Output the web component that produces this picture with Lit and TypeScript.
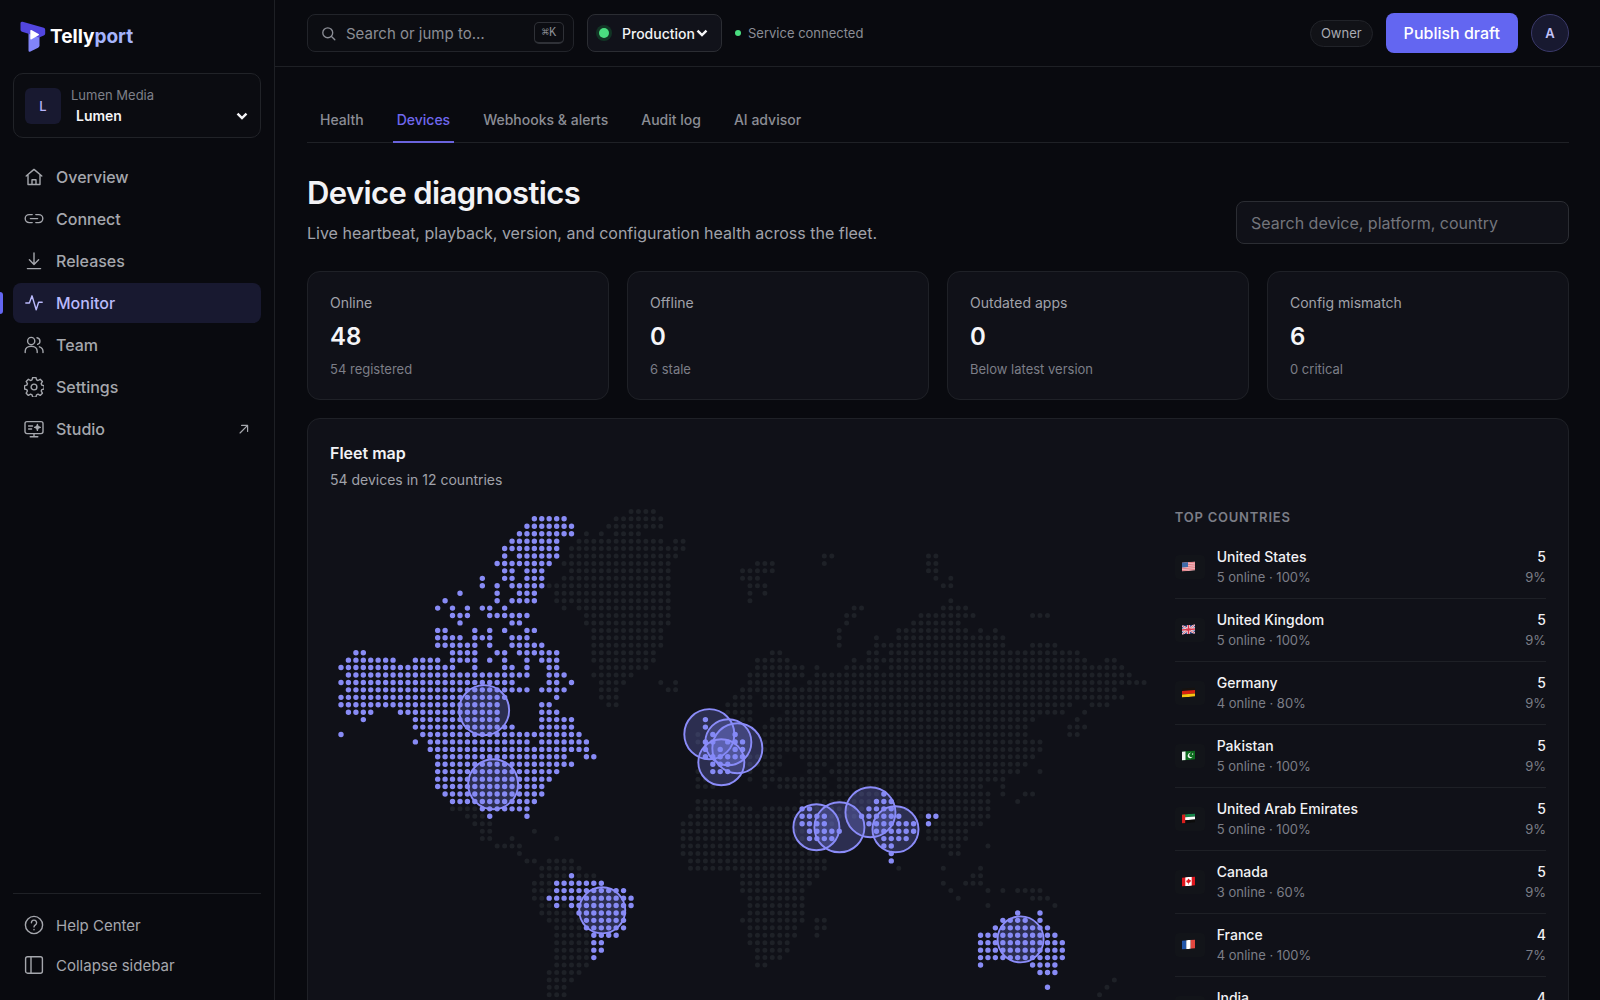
import { LitElement, html, css, svg, nothing, type TemplateResult } from "lit";
import { customElement, property } from "lit/decorators.js";
import { classMap } from "lit/directives/class-map.js";

/* ---------- data ---------- */

interface NavItem { label: string; icon: string; active?: boolean; external?: boolean }

const NAV: NavItem[] = [
  { label: "Overview", icon: "home" },
  { label: "Connect", icon: "link" },
  { label: "Releases", icon: "download" },
  { label: "Monitor", icon: "pulse", active: true },
  { label: "Team", icon: "users" },
  { label: "Settings", icon: "gear" },
  { label: "Studio", icon: "studio", external: true },
];

const TABS = ["Health", "Devices", "Webhooks & alerts", "Audit log", "AI advisor"];

const STATS = [
  { label: "Online", value: 48, note: "54 registered" },
  { label: "Offline", value: 0, note: "6 stale" },
  { label: "Outdated apps", value: 0, note: "Below latest version" },
  { label: "Config mismatch", value: 6, note: "0 critical" },
];

const COUNTRIES = [
  { code: "us", name: "United States", total: 5, online: 5, share: 9 },
  { code: "gb", name: "United Kingdom", total: 5, online: 5, share: 9 },
  { code: "de", name: "Germany", total: 5, online: 4, share: 9 },
  { code: "pk", name: "Pakistan", total: 5, online: 5, share: 9 },
  { code: "ae", name: "United Arab Emirates", total: 5, online: 5, share: 9 },
  { code: "ca", name: "Canada", total: 5, online: 3, share: 9 },
  { code: "fr", name: "France", total: 4, online: 4, share: 7 },
  { code: "in", name: "India", total: 4, online: 4, share: 7 },
];

/* Land dots, one entry per grid row: column runs such as "3,10-21". */
const LAND: Record<number, string> = {
  0: "39-42", 1: "37-43", 2: "36-43", 3: "33,35,37-40", 4: "32-43,45-46", 5: "31-46",
  6: "31-45,65-66,79-80", 7: "30-44,56-58,65,79-80", 8: "31-44,54-58,79-80", 9: "30-44,54-56,80,82",
  10: "28-44,55-57,81-82", 11: "29-44,55,57", 12: "29-44,55,82", 13: "30,32-44,69-70,81-84",
  14: "33-44,68-69,78-85,93-95", 15: "33-44,68,77-83", 16: "34-43,67,75-84,86,88",
  17: "34-43,67,72,75-89", 18: "34-43,67,72-89,93-96", 19: "34-42,58-59,71-72,74-99",
  20: "34-42,56-60,69,71-100,103-104", 21: "35-41,56-62,64,68-72,74-105",
  22: "34-39,55-62,64-106", 23: "35-38,43,45,55-60,63-108", 24: "35-37,44-45,54-104",
  25: "35-37,53-55,57-105", 26: "36-37,52-55,57-98,101-103", 27: "52-55,60-97,100",
  28: "54-55,58-93,99", 29: "57-92,98-100", 30: "48,57-92,98-99", 31: "48,57-94", 32: "57-94",
  33: "55-59,62-93", 34: "55-59,63-65,67-92", 35: "48,55,57-58,63-64,66-91,94",
  36: "48-49,55,57-65,67-89", 37: "48-50,57,59-65,67-86,89", 38: "62-72,74-87,89,92-93",
  39: "48-53,62-71,75-87,91", 40: "15-18,48-55,57-61,64-70,75-87", 41: "17-19,47-61,66-69,78,81-87",
  42: "18-20,46-61,66,80-86", 43: "19-20,26,46-62,79-84", 44: "19-20,23,29,46-62,79-84",
  45: "21-24,46-62,81-83,87", 46: "24,46-64,82-83", 47: "25-26,28-31,47-65",
  48: "27-32,47-65,75,81,86", 49: "27-30,32-34,54-64,85-86", 50: "26-28,54-63,81,84-86",
  51: "26-28,54-62,82,87,89,91-94", 52: "26-27,55-62,83,93-95", 53: "27-28,30,55-62,87,96",
  54: "27-31,55-62", 55: "28-32,54-62,64-65", 56: "29-32,55-61,64-65", 57: "29-33,55-61,64",
  58: "29-33,55-60", 59: "29-33,56-60", 60: "29-33,56-59", 61: "29-33,56-57", 62: "28-32",
  63: "28-31,104", 64: "28-30,103", 65: "28-30,102", 66: "28-29",
};

/* Dots of countries that have registered devices. */
const ACTIVE: Record<number, string> = {
  1: "26-30", 2: "25-31", 3: "24-31", 4: "23-29", 5: "22-29", 6: "22,24-29", 7: "21-28",
  8: "22-23,25-27", 9: "19,22-23,25-27", 10: "19,21,23-27", 11: "16,21,24-26", 12: "14,21,23-26",
  13: "13,15,17,19-20,22", 14: "15-17,20-25", 15: "16,23-24", 16: "13-14,18,20,22,25-26",
  17: "13-16,18-20,23-25", 18: "13-18,20,23-27", 19: "2-3,15-18,21-22,24-29",
  20: "1-7,10-13,15-18,20,22,25,27-29", 21: "0-15,18,22-23,25,28-29", 22: "1-25,28-30",
  23: "0-23,28-29,31", 24: "1-25,27-30", 25: "0-22,29", 26: "0-21,27-28", 27: "1-4,8-21,27-29",
  28: "3,10-21,27-31,49", 29: "10-23,27-31,49", 30: "0,11-32,50,53", 31: "10,12-25,27-33,49-50,52-54",
  32: "12-33,49,51,53-54", 33: "13-30,33-34,49-54", 34: "13-31,50-52", 35: "13-29,50-52",
  36: "13-28", 37: "13-27", 38: "14-27,73", 39: "15-26,72-74", 40: "19-25,62-63,71-74",
  41: "20,25,62-65,70-75,79-80", 42: "62-65,71-77,79", 43: "63-67,72-77", 44: "63-66,73-76",
  45: "73-74", 46: "74", 47: "74", 49: "31", 50: "29-35", 51: "29-38", 52: "28-39", 53: "29,31-39",
  54: "32-38,91,94", 55: "33-38,89-92,94", 56: "33-38,88-95", 57: "34-37,86-96", 58: "34-35,86-97",
  59: "34-35,86-97", 60: "34,86-97", 61: "86,93-96", 62: "94-96", 64: "95",
};

const MARKERS = [
  { name: "Canada", x: 154, y: 206, r: 25 },
  { name: "United States", x: 163, y: 280, r: 25 },
  { name: "United Kingdom", x: 379, y: 230, r: 25 },
  { name: "Germany", x: 407, y: 244, r: 25 },
  { name: "Netherlands", x: 398, y: 238, r: 23 },
  { name: "France", x: 391, y: 258, r: 23 },
  { name: "Saudi Arabia", x: 486, y: 323, r: 23 },
  { name: "United Arab Emirates", x: 509, y: 323, r: 25 },
  { name: "Pakistan", x: 540, y: 308, r: 25 },
  { name: "India", x: 565, y: 325, r: 23 },
  { name: "Brazil", x: 272, y: 406, r: 23 },
  { name: "Australia", x: 690, y: 435, r: 23 },
];

const PITCH = 7.43;

/* Zero-length round-capped strokes draw every dot of a layer in one path. */
function dotPath(rows: Record<number, string>): string {
  let d = "";
  for (const [row, runs] of Object.entries(rows)) {
    for (const run of runs.split(",")) {
      const [from, to = from] = run.split("-").map(Number);
      for (let c = from; c <= to; c++) {
        d += `M${(11 + c * PITCH).toFixed(1)} ${(7.4 + Number(row) * PITCH).toFixed(1)}h0`;
      }
    }
  }
  return d;
}

const LAND_PATH = dotPath(LAND);
const ACTIVE_PATH = dotPath(ACTIVE);

/* ---------- icons ---------- */

const ICONS: Record<string, TemplateResult> = {
  home: svg`<path d="M2.2 9 10 2.4 17.8 9M4 7.8v9.7h12V7.8M8 17.3v-4.6h4v4.6"/>`,
  link: svg`<path d="M8.2 5.6H5.2a4 4 0 0 0 0 8h3M11.8 5.6h3a4 4 0 0 1 0 8h-3M6.4 9.6h7.2"/>`,
  download: svg`<path d="M10 2v11.2M5.4 8.8l4.6 4.6 4.6-4.6M3.4 17.6h13.2"/>`,
  pulse: svg`<path d="M1.8 10h3.6L8 2.8l4.2 14 2.4-7.6h3.6"/>`,
  users: svg`<circle cx="7.2" cy="6" r="3.6"/><path d="M1.2 17.6v-1.4c0-3 2.6-5 6-5s6 2 6 5v1.4M13 2.8a3.4 3.4 0 0 1 .6 6.6M15.4 11.8c2.2.7 3.6 2.4 3.6 4.6v1.2"/>`,
  gear: svg`<circle cx="10" cy="10" r="2.9"/><path d="M8.4 1.2h3.2l.7 2.4 1.4.6 2.2-1.2 2.2 2.2-1.2 2.2.6 1.4 2.4.7v3.2l-2.4.6-.6 1.4 1.2 2.2-2.2 2.2-2.2-1.2-1.4.6-.7 2.3H8.4l-.7-2.3-1.4-.6-2.200 1.200-2.200-2.200 1.200-2.200-.6-1.400L.2 12.700V9.500l2.300-.7.6-1.400-1.200-2.200 2.200-2.200 2.200 1.200 1.400-.6z" transform="translate(.3 -.7)"/>`,
  studio: svg`<rect x="1" y="2.600" width="18" height="12" rx="2"/><path d="M10 14.600v3M6.200 17.800h7.600M4.600 7h4M4.600 10h3M13.400 5.400v6M10.600 8.400h5.600"/><path d="M13.400 6.400l.8 1.300 1.600.7-1.600.7-.8 1.300-.8-1.300-1.600-.7 1.600-.7z" fill="currentColor"/>`,
  help: svg`<circle cx="10" cy="10" r="8.600"/><path d="M7.400 7.700a2.600 2.600 0 1 1 4 2.200c-.9.600-1.400 1-1.400 2M10 14.500v.3"/>`,
  panel: svg`<rect x="1.600" y="1.800" width="16.800" height="16.400" rx="2"/><path d="M7 1.800v16.400"/>`,
  search: svg`<circle cx="9" cy="9" r="6.600"/><path d="M14 14l4.400 4.400"/>`,
  arrow: svg`<path d="M3.400 16.600 16 4M6 4h10v10"/>`,
  chevron: svg`<path d="M2.500 6 10 13.500 17.500 6"/>`,
};

const icon = (name: string, cls = "icon") =>
  html`<svg class=${cls} viewBox="0 0 20 20" aria-hidden="true">${ICONS[name]}</svg>`;

const FLAGS: Record<string, TemplateResult> = {
  us: svg`<path fill="#f3c3c8" d="M0 0h13v9H0z"/><path stroke="#dd6b75" stroke-width=".8" d="M0 .8h13M0 2.600h13M0 4.400h13M0 6.200h13M0 8h13"/><path fill="#3f6aa8" d="M0 0h6v5H0z"/>`,
  gb: svg`<path fill="#2c3f86" d="M0 0h13v9H0z"/><path stroke="#f3eef2" stroke-width="2" d="M0 0l13 9M13 0 0 9"/><path stroke="#f3eef2" stroke-width="3.200" d="M6.500 0v9M0 4.500h13"/><path stroke="#d8354a" stroke-width=".7" d="M0 0l13 9M13 0 0 9"/><path stroke="#d8354a" stroke-width="1.600" d="M6.500 0v9M0 4.500h13"/>`,
  de: svg`<path fill="#17120f" d="M0 0h13v3H0z"/><path fill="#d8220f" d="M0 2.500h13V6H0z"/><path fill="#f6c512" d="M0 6h13v3H0z"/>`,
  pk: svg`<path fill="#0d6b1e" d="M0 0h13v9H0z"/><path fill="#f4f4f4" d="M0 0h3.500v9H0z"/><path fill="#f4f4f4" d="M9.200 2a2.700 2.700 0 1 0 1.600 3.900A2.200 2.200 0 1 1 9.200 2zM10 2.800h1.200V4H10z"/>`,
  ae: svg`<path fill="#16854a" d="M0 0h13v3H0z"/><path fill="#fff" d="M0 3h13v3H0z"/><path fill="#0c0c0c" d="M0 6h13v3H0z"/><path fill="#d81e1e" d="M0 0h3.200v9H0z"/>`,
  ca: svg`<path fill="#e0161d" d="M0 0h13v9H0z"/><path fill="#fff" d="M3.300 0h6.400v9H3.300z"/><path fill="#e0161d" d="M6.500 1.500 8 3.500l1-.3-.6 2L6.800 6v1.500h-.6V6l-1.600-.8-.6-2 1 .3z"/>`,
  fr: svg`<path fill="#2256a8" d="M0 0h4.400v9H0z"/><path fill="#fff" d="M4.300 0h4.400v9H4.300z"/><path fill="#e2463f" d="M8.700 0H13v9H8.700z"/>`,
  in: svg`<path fill="#f39a32" d="M0 0h13v3H0z"/><path fill="#fff" d="M0 3h13v3H0z"/><path fill="#1c8a3a" d="M0 6h13v3H0z"/><circle cx="6.500" cy="4.500" r="1.200" fill="#26408f"/>`,
};

const shared = css`
  * { box-sizing: border-box; }
  h1, h2, h3, p, ul, ol { margin: 0; padding: 0; }
  ul, ol { list-style: none; }
  a { color: inherit; text-decoration: none; }
  button, input, select { font: inherit; color: inherit; margin: 0; }
  .icon, .icon-sm, .chevron {
    flex: none; fill: none; stroke: currentColor; stroke-width: 1.4;
    stroke-linecap: round; stroke-linejoin: round;
  }
  .icon { width: 20px; height: 20px; }
  .icon-sm { width: 12px; height: 12px; stroke-width: 2; }
  .chevron { width: 12px; height: 12px; color: #f5f5f7; stroke-width: 4; pointer-events: none; stroke-linecap: butt; stroke-linejoin: miter; }
`;

/* ---------- sidebar ---------- */

@customElement("app-sidebar")
export class AppSidebar extends LitElement {
  static styles = [shared, css`
    :host {
      display: flex; flex-direction: column; padding: 20px 13px 15px;
      border-right: 1px solid #1e2025; background: #090a0f; color: #a5a7ad;
    }
    .brand { display: flex; align-items: center; gap: 4px; height: 33px; padding-left: 7px; font-size: 19px; font-weight: 700; color: #fff; }
    .brand svg { width: 26px; height: 31px; }
    .brand .tail { color: #a5b4fc; }
    .workspace {
      display: flex; align-items: center; gap: 10px; margin-top: 20px; padding: 10px 12px 10px 11px;
      height: 65px; border: 1px solid #212328; border-radius: 10px; background: #0b0c11;
    }
    .tile { display: grid; place-items: center; width: 36px; height: 36px; border-radius: 6px; background: #181930; color: #b9b5fb; font-size: 13px; font-weight: 500; }
    .fields { flex: 1; display: flex; flex-direction: column; }
    .fields label { font-size: 13px; line-height: 20px; color: #7e8089; }
    .picker { display: flex; align-items: center; }
    .picker select { flex: 1; height: 21px; appearance: none; border: 0; background: none; padding: 0 5px; font-size: 14px; font-weight: 600; color: #f5f5f7; }
    .nav { display: flex; flex-direction: column; gap: 2px; margin-top: 19px; }
    .item {
      position: relative; display: flex; align-items: center; gap: 12px; width: 100%; height: 40px;
      padding: 0 11px; border: 0; border-radius: 8px; background: none; font-size: 16px; font-weight: 500; text-align: left;
    }
    .item .label { flex: 1; }
    .item.active { background: #181930; color: #bab9fb; }
    .item.active::before { content: ""; position: absolute; left: -13px; top: 9px; width: 3px; height: 22px; border-radius: 0 3px 3px 0; background: #6366f1; }
    .foot { margin-top: auto; padding-top: 11px; border-top: 1px solid #1f2126; }
    .foot .item { font-size: 15px; font-weight: 400; }
  `];

  render() {
    return html`
      <a class="brand" href="#home" aria-label="Tellyport">
        <svg viewBox="0 0 26 31" aria-hidden="true">
          <path fill="#8184f8" d="M8.500 11h11v13.500q0 1.500-1.400 2.200L10.500 30.500q-2 .9-2-1z"/>
          <path fill="#5246e0" d="M.5 2.200Q.5.200 2.600.8l21.200 6Q25.300 7.300 25.200 9v3.500q0 1.600-1.400 2L19 16.500 8.500 12.800 2 10.800Q.5 10.300.5 8.800z"/>
          <path fill="#fff" d="M10.300 9.800q0-1.200 1.100-.7l7.200 4q1 .6 0 1.200l-7 4q-1.300.6-1.300-.8z"/>
        </svg>
        <span>Telly<span class="tail">port</span></span>
      </a>
      <div class="workspace">
        <span class="tile">L</span>
        <div class="fields">
          <label for="workspace">Lumen Media</label>
          <div class="picker"><select id="workspace"><option>Lumen</option></select>${icon("chevron", "chevron")}</div>
        </div>
      </div>
      <nav class="nav" aria-label="Main">
        ${NAV.map((n) => html`
          <a class=${classMap({ item: true, active: !!n.active })} href="#${n.label.toLowerCase()}">
            ${icon(n.icon)}<span class="label">${n.label}</span>${n.external ? icon("arrow", "icon-sm") : nothing}
          </a>`)}
      </nav>
      <div class="foot">
        <a class="item" href="#help">${icon("help")}<span class="label">Help Center</span></a>
        <button class="item" type="button">${icon("panel")}<span class="label">Collapse sidebar</span></button>
      </div>`;
  }
}

/* ---------- top bar ---------- */

@customElement("app-topbar")
export class AppTopbar extends LitElement {
  static styles = [shared, css`
    :host {
      display: flex; align-items: center; gap: 13px; height: 67px; padding: 0 31px 0 32px;
      border-bottom: 1px solid #1e2025; color: #8b8d95; font-size: 13px;
    }
    .jump {
      display: flex; align-items: center; gap: 10px; width: 267px; height: 38px; padding: 0 9px 0 13px;
      border: 1px solid #22242a; border-radius: 8px; background: #0c0d12; font-size: 15px; text-align: left;
    }
    .jump .hint { flex: 1; }
    .jump .icon { width: 15px; height: 15px; stroke-width: 1.8; }
    kbd { display: grid; place-items: center; width: 30px; height: 22px; border: 1px solid #2f3137; border-bottom-width: 2px; border-radius: 5px; font: 500 12px "Liberation Mono", "DejaVu Sans Mono", monospace; }
    .env {
      display: flex; align-items: center; height: 38px; padding: 0 13px 0 11px;
      border: 1px solid #2b2d33; border-radius: 8px; background: #11121a;
    }
    .env select { appearance: none; border: 0; background: none; padding: 0 1px 0 4px; margin-left: 9px; font-size: 14px; font-weight: 500; color: #f2f2f5; }
    .env .live { width: 10px; height: 10px; border-radius: 50%; background: #4ade80; box-shadow: 0 0 0 3px #123425; }
    .service { display: flex; align-items: center; gap: 7px; }
    .service .live { width: 6px; height: 6px; border-radius: 50%; background: #4ade80; }
    .role { margin-left: auto; padding: 0 10px; border: 1px solid #212329; border-radius: 14px; background: #111217; line-height: 25px; color: #a9abb3; }
    .publish { height: 40px; padding: 0 18px; border: 0; border-radius: 8px; background: #6366f1; color: #fff; font-size: 16px; font-weight: 500; }
    .avatar { width: 38px; height: 38px; padding: 0; border: 1px solid #3b3a6b; border-radius: 50%; background: #181930; color: #c2c2fb; font-weight: 600; font-size: 13px; }
  `];

  render() {
    return html`
      <button class="jump" type="button">${icon("search")}<span class="hint">Search or jump to…</span><kbd>⌘K</kbd></button>
      <div class="env">
        <span class="live"></span>
        <select aria-label="Environment"><option>Production</option></select>${icon("chevron", "chevron")}
      </div>
      <span class="service"><span class="live"></span>Service connected</span>
      <span class="role">Owner</span>
      <button class="publish" type="button">Publish draft</button>
      <button class="avatar" type="button" aria-label="Account: A">A</button>`;
  }
}

/* ---------- fleet map ---------- */

@customElement("fleet-map")
export class FleetMap extends LitElement {
  static styles = css`
    :host { display: block; }
    .map { display: block; width: 100%; height: auto; }
    .land, .active { fill: none; stroke-linecap: round; }
    .land { stroke: #1e2127; stroke-width: 5; }
    .active { stroke: #888bf5; stroke-width: 5.4; }
    .marker { fill: #8189f8; fill-opacity: .25; stroke: #8b8cf9; stroke-width: 1.9; }
  `;

  render() {
    return html`
      <svg class="map" viewBox="0 0 820 505" role="img" aria-label="Devices by country">
        <path class="land" d=${LAND_PATH} />
        <path class="active" d=${ACTIVE_PATH} />
        ${MARKERS.map((m) => svg`<circle class="marker" cx=${m.x} cy=${m.y} r=${m.r}></circle>`)}
      </svg>`;
  }
}

/* ---------- stat card ---------- */

@customElement("stat-card")
export class StatCard extends LitElement {
  @property() label = "";
  @property({ type: Number }) value = 0;
  @property() note = "";

  static styles = [shared, css`
    :host { display: block; padding: 20px 22px 19px; border: 1px solid #1f2127; border-radius: 13px; background: #101118; }
    .label { font-size: 14px; line-height: 22px; color: #a0a2aa; }
    .value { margin: 5px 0 4px; font-size: 24px; line-height: 35px; font-weight: 600; color: #f5f5f7; }
    .note { font-size: 13px; line-height: 22px; color: #7c7e87; }
  `];

  render() {
    return html`<p class="label">${this.label}</p><p class="value">${this.value}</p><p class="note">${this.note}</p>`;
  }
}

/* ---------- page ---------- */

@customElement("app-root")
export class AppRoot extends LitElement {
  static styles = [shared, css`
    :host {
      display: grid; grid-template-columns: 275px minmax(0, 1fr); height: 100vh; overflow: hidden;
      background: #090a0f; color: #f2f2f5; font-family: Inter, "Liberation Sans", sans-serif;
    }
    .column { display: flex; flex-direction: column; min-width: 0; min-height: 0; }
    main { flex: 1; min-height: 0; overflow-y: auto; scrollbar-width: none; padding: 32px 31px 32px 32px; }
    .tabs { display: flex; gap: 25px; padding: 0 9px; border-bottom: 1px solid #1f2126; }
    .tab { height: 44px; padding: 0 4px; margin-bottom: -1px; border-bottom: 2px solid transparent; font-size: 14px; line-height: 41px; font-weight: 500; color: #8b8d95; }
    .tab.on { color: #7068ee; border-color: #6a63dd; }
    .head { display: flex; align-items: flex-end; justify-content: space-between; margin: 30px 0 27px; }
    .head h1 { font-size: 31px; line-height: 40px; font-weight: 600; letter-spacing: -0.02em; }
    .head p { margin-top: 9px; font-size: 16px; line-height: 22px; color: #a0a2aa; }
    .find { width: 333px; height: 43px; padding: 0 14px; border: 1px solid #2b2d33; border-radius: 8px; background: #101118; font-size: 16px; }
    .find::placeholder { color: #73757c; opacity: 1; }
    .stats { display: grid; grid-template-columns: repeat(4, minmax(0, 1fr)); gap: 18px; }
    .fleet { margin-top: 18px; padding: 22px; border: 1px solid #1f2127; border-radius: 13px; background: #101118; }
    .fleet h2 { font-size: 16px; line-height: 24px; font-weight: 600; }
    .fleet .sub { margin-top: 4px; font-size: 14px; line-height: 22px; color: #a0a2aa; }
    .body { display: grid; grid-template-columns: minmax(0, 820fr) minmax(0, 371fr); gap: 24px; margin-top: 13px; align-items: start; }
    .body h3 { font-size: 13px; line-height: 26px; font-weight: 600; letter-spacing: 0.06em; color: #7c7e87; text-transform: uppercase; }
    .row { display: flex; align-items: center; gap: 12px; height: 63px; border-bottom: 1px solid #1e2026; font-size: 13px; line-height: 21px; color: #7c7e87; }
    .row:first-child { margin-top: 6px; }
    .flag { display: flex; align-items: center; width: 30px; height: 24px; padding: 0 0 2px 7px; border-radius: 4px; background: #121419; }
    .flag svg { width: 13px; height: 9px; transform: skewY(-5deg); }
    .who { flex: 1; }
    .count { text-align: right; }
    .row strong { display: block; font-size: 14px; font-weight: 500; color: #f2f2f5; }
  `];

  render() {
    return html`
      <app-sidebar></app-sidebar>
      <div class="column">
        <app-topbar></app-topbar>
        <main>
          <nav class="tabs" aria-label="Monitor">
            ${TABS.map((t) => html`<a class=${classMap({ tab: true, on: t === "Devices" })} href="#">${t}</a>`)}
          </nav>
          <header class="head">
            <div>
              <h1>Device diagnostics</h1>
              <p>Live heartbeat, playback, version, and configuration health across the fleet.</p>
            </div>
            <input class="find" type="search" aria-label="Search devices" placeholder="Search device, platform, country" />
          </header>
          <section class="stats" aria-label="Fleet summary">
            ${STATS.map((s) => html`<stat-card .label=${s.label} .value=${s.value} .note=${s.note}></stat-card>`)}
          </section>
          <section class="fleet">
            <h2>Fleet map</h2>
            <p class="sub">54 devices in 12 countries</p>
            <div class="body">
              <fleet-map></fleet-map>
              <div>
                <h3>Top countries</h3>
                <ol>
                  ${COUNTRIES.map((c) => html`
                    <li class="row">
                      <span class="flag"><svg viewBox="0 0 13 9" aria-hidden="true">${FLAGS[c.code]}</svg></span>
                      <div class="who"><strong>${c.name}</strong>${c.online} online · ${Math.round((c.online / c.total) * 100)}%</div>
                      <div class="count"><strong>${c.total}</strong>${c.share}%</div>
                    </li>`)}
                </ol>
              </div>
            </div>
          </section>
        </main>
      </div>`;
  }
}
